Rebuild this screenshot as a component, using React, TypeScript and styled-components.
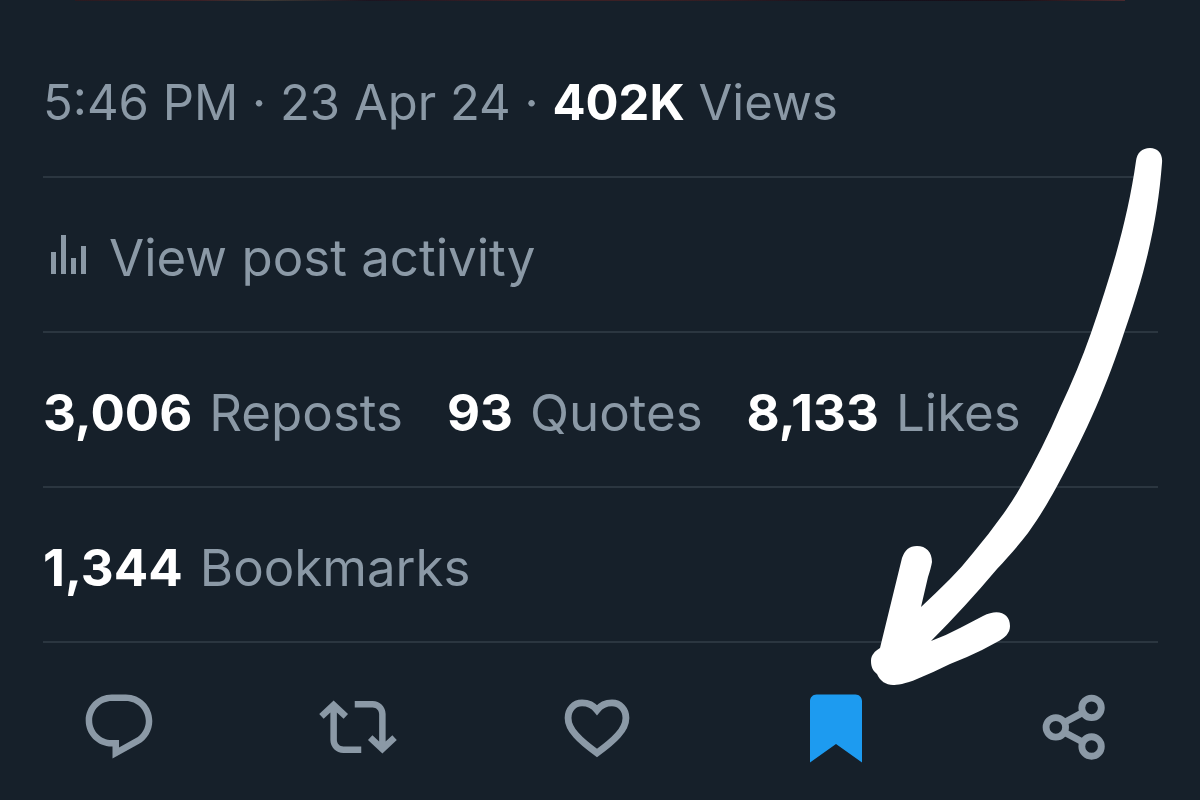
import React from 'react';
import styled, { createGlobalStyle } from 'styled-components';

const colors = {
  background: '#16202a',
  muted: '#8b99a6',
  strong: '#ffffff',
  divider: '#2b3640',
  active: '#1d9bf0',
};

const GlobalStyle = createGlobalStyle`
  *, *::before, *::after { box-sizing: border-box; }
  body {
    margin: 0;
    background: ${colors.background};
    color: ${colors.muted};
    font-family: Inter, Roboto, sans-serif;
  }
`;

const Post = styled.article`
  position: relative;
  overflow: hidden;
  min-height: 100vh;
`;

const PhotoEdge = styled.div`
  height: 1px;
  margin: 0 75px;
  background: linear-gradient(90deg, #2a1a20, #3c2026 12%, #3d3a36 18%, #1c1420 28%, #3c2026 42%, #3c2024 55%, #301c22 62%, #120f1c 74%, #1c1018 90%, #4a2a2e);
`;

const Details = styled.div`
  padding: 22px 42px 0 43px;
`;

const Row = styled.div<{ $size?: number }>`
  display: flex;
  align-items: center;
  min-height: 155px;
  padding-top: 6px;
  border-bottom: 2px solid ${colors.divider};
  font-size: ${({ $size = 51 }) => $size}px;
  line-height: 64px;
  white-space: nowrap;
`;

const Meta = styled.p`
  margin: 0;
`;

const Strong = styled.strong`
  color: ${colors.strong};
  font-weight: 700;
`;

const TextLink = styled.a`
  display: flex;
  align-items: center;
  gap: 17px;
  color: inherit;
  text-decoration: none;
`;

const Stats = styled.div`
  display: flex;
  gap: 44px;
`;

const BarsIcon = styled.svg`
  width: 49px;
  height: 49px;
  fill: currentColor;
`;

const Actions = styled.div`
  display: grid;
  grid-template-columns: repeat(5, 1fr);
  margin-right: 6px;
  padding: 45px 0 32px;
`;

const ActionButton = styled.button<{ $active?: boolean }>`
  display: flex;
  justify-content: center;
  padding: 0;
  border: 0;
  background: none;
  color: ${({ $active }) => ($active ? colors.active : colors.muted)};
  cursor: pointer;
`;

const ActionIcon = styled.svg`
  width: 78px;
  height: 78px;
  fill: currentColor;
`;

/* Hand-drawn arrow laid over the post, pointing at the bookmark button. */
const Arrow = styled.svg`
  position: absolute;
  top: 140px;
  right: 0;
  width: 340px;
  height: 560px;
  fill: ${colors.strong};
  pointer-events: none;
`;

const stats = [
  { value: '3,006', label: 'Reposts' },
  { value: '93', label: 'Quotes' },
  { value: '8,133', label: 'Likes' },
];

function Stat({ value, label }: { value: string; label: string }) {
  return (
    <TextLink href="#">
      <Strong>{value}</Strong>
      <span>{label}</span>
    </TextLink>
  );
}

export default function App() {
  return (
    <>
      <GlobalStyle />
      <Post>
        <PhotoEdge />
        <Details>
          <Row $size={49}>
            <Meta>
              5:46 PM · 23 Apr 24 · <Strong>402K</Strong> Views
            </Meta>
          </Row>
          <Row>
            <TextLink href="#">
              <BarsIcon viewBox="0 0 49 49" aria-hidden="true">
                <path d="M8 19h5v22H8zM18 2h5v39h-5zM28 25h5v16h-5zM38 13h5v28h-5z" />
              </BarsIcon>
              <span>View post activity</span>
            </TextLink>
          </Row>
          <Row>
            <Stats>
              {stats.map((s) => (
                <Stat key={s.label} {...s} />
              ))}
            </Stats>
          </Row>
          <Row>
            <Stat value="1,344" label="Bookmarks" />
          </Row>
        </Details>
        <Actions>
          <ActionButton aria-label="Reply">
            <ActionIcon viewBox="0 0 24 24">
              <path d="M1.751 10c0-4.42 3.584-8 8.005-8h4.366c4.49 0 8.129 3.64 8.129 8.13 0 2.96-1.607 5.68-4.196 7.11l-8.054 4.46v-3.69h-.067c-4.49.1-8.183-3.51-8.183-8.01zm8.005-6c-3.317 0-6.005 2.69-6.005 6 0 3.37 2.77 6.08 6.138 6.01l.351-.01h1.761v2.3l5.087-2.81c1.951-1.08 3.163-3.13 3.163-5.36 0-3.39-2.744-6.13-6.129-6.13H9.756z" />
            </ActionIcon>
          </ActionButton>
          <ActionButton aria-label="Repost">
            <ActionIcon viewBox="0 0 24 24">
              <path d="M4.5 3.88l4.432 4.14-1.364 1.46L5.5 7.55V16c0 1.1.896 2 2 2H13v2H7.5c-2.209 0-4-1.79-4-4V7.55L1.432 9.48.068 8.02 4.5 3.88zM16.5 6H11V4h5.5c2.209 0 4 1.79 4 4v8.45l2.068-1.93 1.364 1.46-4.432 4.14-4.432-4.14 1.364-1.46 2.068 1.93V8c0-1.1-.896-2-2-2z" />
            </ActionIcon>
          </ActionButton>
          <ActionButton aria-label="Like">
            <ActionIcon viewBox="0 0 24 24">
              <path
                d="M12 6.8C10.9 5.4 9.2 4.6 7.4 4.6C4.9 4.6 3.1 6.6 3.1 9.2C3.1 12.8 6.6 16.1 12 20C17.4 16.1 20.9 12.8 20.9 9.2C20.9 6.6 19.1 4.6 16.6 4.6C14.8 4.6 13.1 5.4 12 6.8Z"
                fill="none"
                stroke="currentColor"
                strokeWidth="2.1"
              />
            </ActionIcon>
          </ActionButton>
          <ActionButton aria-label="Remove bookmark" $active>
            <ActionIcon viewBox="0 0 24 24">
              <path d="M4 4c0-1.1.9-2 2-2h12c1.1 0 2 .9 2 2v18.9l-8-5.7-8 5.7V4z" />
            </ActionIcon>
          </ActionButton>
          <ActionButton aria-label="Share">
            <ActionIcon viewBox="0 0 24 24">
              <g fill="none" stroke="currentColor" strokeWidth="2.1">
                <circle cx="6.1" cy="12.1" r="3" />
                <circle cx="17.1" cy="6.1" r="3" />
                <circle cx="17.1" cy="18" r="3" />
                <path d="M8.7 10.6l5.8-3.1M8.7 13.6l5.8 3.1" />
              </g>
            </ActionIcon>
          </ActionButton>
        </Actions>
        <Arrow viewBox="860 140 340 560" aria-hidden="true">
          <path d="M1136 161C1137 153 1142 148 1150 148C1158 148 1163 154 1162 163C1158 215 1148 265 1124 333C1108 382 1088 430 1056 488C1046 506 1038 519 1028 533C1018 546 1008 557 997 569Q965 607 931 641Q945 636 960 628L983 616C999 608 1010 614 1010 626C1010 633 1005 638 997 642Q983 650 967 657L950 664Q934 672 917 679C906 684 896 685 893 685C886 685 880 681 877 674C873 671 871 667 871 661C871 655 875 651 880 648L902 558C905 550 909 546 917 546C926 546 932 552 932 562Q931 568 928 577L921 607Q936 593 950 579Q962 567 973 553Q989 534 1004 513Q1013 500 1020 488Q1043 448 1060 408Q1078 370 1091 333C1112 272 1128 218 1136 161Z" />
        </Arrow>
      </Post>
    </>
  );
}
